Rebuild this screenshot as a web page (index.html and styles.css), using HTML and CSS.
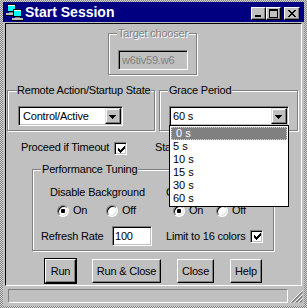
FILE: index.html
```html
<!DOCTYPE html>
<html>
<head>
<meta charset="utf-8">
<title>Start Session</title>
<link rel="stylesheet" href="styles.css">
</head>
<body>
<div class="window">
  <div class="frame">
    <div class="titlebar">
      <svg class="appicon" width="17" height="17" viewBox="0 0 17 17" shape-rendering="crispEdges">
        <rect x="1" y="0" width="9" height="8" fill="#000"/>
        <rect x="2" y="1" width="7" height="6" fill="#00ffff"/>
        <rect x="2" y="1" width="7" height="1" fill="#fff"/>
        <rect x="3" y="8" width="5" height="1" fill="#808080"/>
        <rect x="0" y="9" width="10" height="2" fill="#c0c0c0"/>
        <rect x="0" y="11" width="10" height="1" fill="#000"/>
        <rect x="7" y="5" width="9" height="8" fill="#000"/>
        <rect x="8" y="6" width="7" height="6" fill="#00ffff"/>
        <rect x="8" y="6" width="7" height="1" fill="#fff"/>
        <rect x="9" y="13" width="5" height="1" fill="#808080"/>
        <rect x="6" y="14" width="11" height="2" fill="#c0c0c0"/>
        <rect x="6" y="16" width="11" height="1" fill="#000"/>
      </svg>
      <span class="title">Start Session</span>
      <div class="tbtns">
        <span class="tbtn"><svg width="13" height="11" viewBox="0 0 13 11" shape-rendering="crispEdges"><rect x="3" y="7" width="6" height="2"/></svg></span>
        <span class="tbtn"><svg width="13" height="11" viewBox="0 0 13 11" shape-rendering="crispEdges"><path fill-rule="evenodd" d="M2 1h9v9h-9zM3 3h7v6h-7z"/></svg></span>
        <span class="tbtn close"><svg width="14" height="11" viewBox="0 0 14 11" shape-rendering="crispEdges"><path d="M3 2h2v1h-2zM9 2h2v1h-2zM4 3h2v1h-2zM8 3h2v1h-2zM5 4h4v1h-4zM6 5h2v1h-2zM5 6h4v1h-4zM4 7h2v1h-2zM8 7h2v1h-2zM3 8h2v1h-2zM9 8h2v1h-2z"/></svg></span>
      </div>
    </div>

    <div class="client">
      <div class="group target">
        <div class="legend dis">Target chooser</div>
        <div class="textbox disbox">w6tiv59.w6</div>
      </div>

      <div class="grouprow">
        <div class="group remote">
          <div class="legend">Remote Action/Startup State</div>
          <div class="combo c-remote">
            <span class="ctext">Control/Active</span>
            <span class="cbtn"><svg width="7" height="4" viewBox="0 0 7 4" shape-rendering="crispEdges"><path d="M0 0h7v1h-1v1h-1v1h-1v1h-1v-1h-1v-1h-1v-1h-1z"/></svg></span>
          </div>
        </div>
        <div class="group grace">
          <div class="legend">Grace Period</div>
          <div class="combo c-grace">
            <span class="ctext">60 s</span>
            <span class="cbtn"><svg width="7" height="4" viewBox="0 0 7 4" shape-rendering="crispEdges"><path d="M0 0h7v1h-1v1h-1v1h-1v1h-1v-1h-1v-1h-1v-1h-1z"/></svg></span>
            <ul class="droplist">
              <li class="sel">0 s</li>
              <li>5 s</li>
              <li>10 s</li>
              <li>15 s</li>
              <li>30 s</li>
              <li>60 s</li>
            </ul>
          </div>
        </div>
      </div>

      <div class="optrow">
        <span class="olabel">Proceed if Timeout</span>
        <span class="check"><svg width="7" height="7" viewBox="0 0 7 7" shape-rendering="crispEdges"><path d="M6 0h1v1h-1zM5 1h2v1h-2zM0 2h1v1h-1zM4 2h3v1h-3zM0 3h2v1h-2zM3 3h3v1h-3zM0 4h5v1h-5zM1 5h3v1h-3zM2 6h1v1h-1z"/></svg></span>
        <span class="olabel2">Start Minimized</span>
        <span class="check"></span>
      </div>

      <div class="group perf">
        <div class="legend">Performance Tuning</div>
        <div class="prow ra">
          <div class="pc1 pl17">Disable Background</div>
          <div class="pc2">Cursor Shadow</div>
        </div>
        <div class="prow rb">
          <div class="pc1 pl24">
            <span class="ropt w49"><span class="radio on"></span>On</span>
            <span class="ropt"><span class="radio"></span>Off</span>
          </div>
          <div class="pc2 pl7">
            <span class="ropt w43"><span class="radio on"></span>On</span>
            <span class="ropt"><span class="radio"></span>Off</span>
          </div>
        </div>
        <div class="prow rc">
          <div class="pc1 pl8">
            <span class="rlabel">Refresh Rate</span>
            <span class="textbox num">100</span>
          </div>
          <div class="pc2">
            <span class="llabel">Limit to 16 colors</span>
            <span class="check"><svg width="7" height="7" viewBox="0 0 7 7" shape-rendering="crispEdges"><path d="M6 0h1v1h-1zM5 1h2v1h-2zM0 2h1v1h-1zM4 2h3v1h-3zM0 3h2v1h-2zM3 3h3v1h-3zM0 4h5v1h-5zM1 5h3v1h-3zM2 6h1v1h-1z"/></svg></span>
          </div>
        </div>
      </div>

      <div class="btnrow">
        <button class="btn def b-run">Run</button>
        <button class="btn b-runclose">Run &amp; Close</button>
        <button class="btn b-close">Close</button>
        <button class="btn b-help">Help</button>
      </div>
    </div>

    <div class="statusrow">
      <div class="statusbar"></div>
      <svg class="grip" width="14" height="14" viewBox="0 0 14 14">
        <path d="M13.5 1.5L1.5 13.5M13.5 5.5L5.5 13.5M13.5 9.5L9.5 13.5" stroke="#fff" stroke-width="1"/>
        <path d="M13.5 2.5L2.5 13.5M13.5 3.5L3.5 13.5M13.5 6.5L6.5 13.5M13.5 7.5L7.5 13.5M13.5 10.5L10.5 13.5M13.5 11.5L11.5 13.5" stroke="#808080" stroke-width="1"/>
      </svg>
    </div>
  </div>
</div>
</body>
</html>
```

FILE: styles.css
```css
* { box-sizing: border-box; }
html, body { margin: 0; padding: 0; }
body {
  width: 307px;
  height: 308px;
  overflow: hidden;
  font-family: "Liberation Sans", Arial, sans-serif;
  font-size: 11px;
  line-height: 13px;
  letter-spacing: -0.2px;
  color: #000;
  background: #c0c0c0;
}

.window {
  width: 307px;
  height: 308px;
  padding: 2px 3px 0 3px;
  background: repeating-conic-gradient(#808080 0 25%, #d8d8d8 0 50%) 0 0 / 2px 2px;
}
.frame {
  height: 304px;
  background: #c0c0c0;
  display: flex;
  flex-direction: column;
}

/* title bar */
.titlebar {
  height: 20px;
  background: #000080;
  display: flex;
  align-items: center;
  padding-left: 3px;
}
.appicon { display: block; flex: none; }
.title {
  margin-left: 2px;
  color: #fff;
  font-weight: bold;
  font-size: 14px;
  letter-spacing: 0;
  line-height: 20px;
  white-space: nowrap;
}
.tbtns {
  margin-left: auto;
  margin-right: 4px;
  align-self: flex-start;
  margin-top: 5px;
  display: flex;
}
.tbtn {
  width: 15px;
  height: 13px;
  background: #c0c0c0;
  border: 1px solid;
  border-color: #fff #000 #000 #fff;
  box-shadow: inset -1px -1px 0 #808080;
  display: block;
}
.tbtn svg { display: block; }
.tbtn.close { width: 16px; margin-left: 3px; }

/* client area */
.client {
  margin: 1px 0 0 2px;
  width: 297px;
  height: 263px;
  border: 1px solid;
  border-color: #000 #fff #fff #000;
}

/* group boxes */
.group {
  border: 1px solid #808080;
  box-shadow: inset 1px 1px 0 #fff, 1px 1px 0 #fff;
}
.legend {
  display: table;
  margin: -7px 0 0 8px;
  padding: 0 1px;
  background: #c0c0c0;
  white-space: nowrap;
  line-height: 13px;
}
.legend.dis { color: #808080; text-shadow: 1px 1px 0 #fff; }

.target {
  margin: 9px 0 0 102px;
  width: 89px;
  padding-bottom: 4px;
}
.target .textbox {
  margin: 10px 0 0 9px;
  width: 70px;
}

.textbox {
  display: block;
  height: 20px;
  background: #fff;
  border: 1px solid;
  border-color: #808080 #fff #fff #808080;
  box-shadow: inset 1px 1px 0 #000, inset -1px -1px 0 #c0c0c0;
  padding: 3px 0 0 3px;
  white-space: nowrap;
  overflow: hidden;
}
.textbox.disbox { background: #c0c0c0; color: #808080; }

.grouprow {
  display: flex;
  align-items: flex-start;
  margin-top: 15px;
}
.remote { margin-left: 1px; width: 148px; padding-bottom: 4px; }
.remote .legend { margin-left: 9px; padding: 0 1px 0 0; }
.grace { margin-left: 4px; width: 139px; padding-bottom: 4px; }

.combo {
  position: relative;
  display: flex;
  height: 20px;
  margin-top: 9px;
  background: #fff;
  border: 1px solid;
  border-color: #808080 #fff #fff #808080;
  box-shadow: inset 1px 1px 0 #000, inset -1px -1px 0 #c0c0c0;
  padding: 1px;
}
.c-remote { margin-left: 10px; width: 105px; }
.c-grace { margin-left: 9px; width: 120px; }
.ctext {
  flex: 1;
  padding: 2px 0 0 3px;
  white-space: nowrap;
}
.c-grace .ctext { padding-left: 2px; }
.cbtn {
  width: 16px;
  height: 16px;
  background: #c0c0c0;
  border: 1px solid;
  border-color: #dfdfdf #000 #000 #dfdfdf;
  box-shadow: inset -1px -1px 0 #808080, inset 1px 1px 0 #fff;
  display: flex;
  align-items: center;
  justify-content: center;
  padding: 1px 1px 0 0;
}
.cbtn svg { display: block; }

.droplist {
  position: absolute;
  z-index: 10;
  left: -1px;
  top: 18px;
  width: 120px;
  margin: 0;
  padding: 1px;
  list-style: none;
  background: #fff;
  border: 1px solid #000;
}
.droplist li {
  height: 13px;
  line-height: 13px;
  padding-left: 2px;
  white-space: nowrap;
  letter-spacing: 0;
}
.droplist li.sel {
  background: #808080;
  color: #fff;
  padding-left: 5px;
  outline: 1px dotted #d0d0d0;
  outline-offset: -1px;
}

/* checkbox row */
.optrow {
  display: flex;
  align-items: flex-start;
  margin: 11px 0 0 15px;
  height: 13px;
}
.olabel { width: 93px; margin-top: -1px; white-space: nowrap; }
.olabel2 { margin-left: 28px; margin-top: -1px; width: 90px; white-space: nowrap; }

.check {
  flex: none;
  width: 13px;
  height: 13px;
  background: #fff;
  border: 1px solid;
  border-color: #808080 #fff #fff #808080;
  box-shadow: inset 1px 1px 0 #000, inset -1px -1px 0 #c0c0c0;
  display: flex;
  align-items: center;
  justify-content: center;
  padding: 1px 0 0 1px;
}
.check svg { display: block; }

/* performance group */
.perf {
  margin: 14px 0 0 26px;
  width: 242px;
  padding-bottom: 4px;
}
.prow { display: flex; }
.ra { margin-top: 10px; height: 13px; }
.rb { margin-top: 5px; height: 13px; }
.rc { margin-top: 9px; height: 20px; }
.pc1 { width: 133px; display: flex; align-items: center; white-space: nowrap; }
.pc2 { flex: 1; display: flex; align-items: center; white-space: nowrap; }
.pl17 { padding-left: 17px; }
.pl24 { padding-left: 24px; }
.pl8 { padding-left: 8px; }
.pl7 { padding-left: 7px; }

.ropt { display: flex; align-items: center; }
.w49 { width: 49px; }
.w43 { width: 43px; }
.radio {
  flex: none;
  width: 12px;
  height: 12px;
  margin-right: 4px;
  border-radius: 50%;
  background: #fff;
  border: 1px solid;
  border-color: #808080 #fff #fff #808080;
  box-shadow: inset 1px 1px 0 #000, inset -1px -1px 0 #dfdfdf;
  display: flex;
  align-items: center;
  justify-content: center;
}
.radio.on::after {
  content: "";
  width: 4px;
  height: 4px;
  border-radius: 1px;
  background: #000;
}

.rlabel { width: 71px; }
.textbox.num { width: 40px; padding-left: 2px; }
.llabel { width: 84px; }

/* buttons */
.btnrow {
  display: flex;
  align-items: center;
  margin: 8px 0 0 39px;
}
.btn {
  height: 24px;
  padding: 0;
  margin: 0 0 0 16px;
  font: inherit;
  line-height: 13px;
  letter-spacing: -0.2px;
  color: #000;
  background: #c0c0c0;
  border: 1px solid;
  border-color: #fff #000 #000 #fff;
  box-shadow: inset -1px -1px 0 #808080;
  border-radius: 0;
}
.btn.def { outline: 1px solid #000; margin-left: 0; }
.b-run { width: 31px; }
.b-runclose { width: 69px; }
.b-close { width: 37px; }
.b-help { width: 32px; }

/* status */
.statusrow {
  display: flex;
  margin: 3px 0 0 5px;
}
.statusbar {
  width: 280px;
  height: 14px;
  border: 1px solid;
  border-color: #808080 #fff #fff #808080;
}
.grip { display: block; margin-left: 1px; }
```
